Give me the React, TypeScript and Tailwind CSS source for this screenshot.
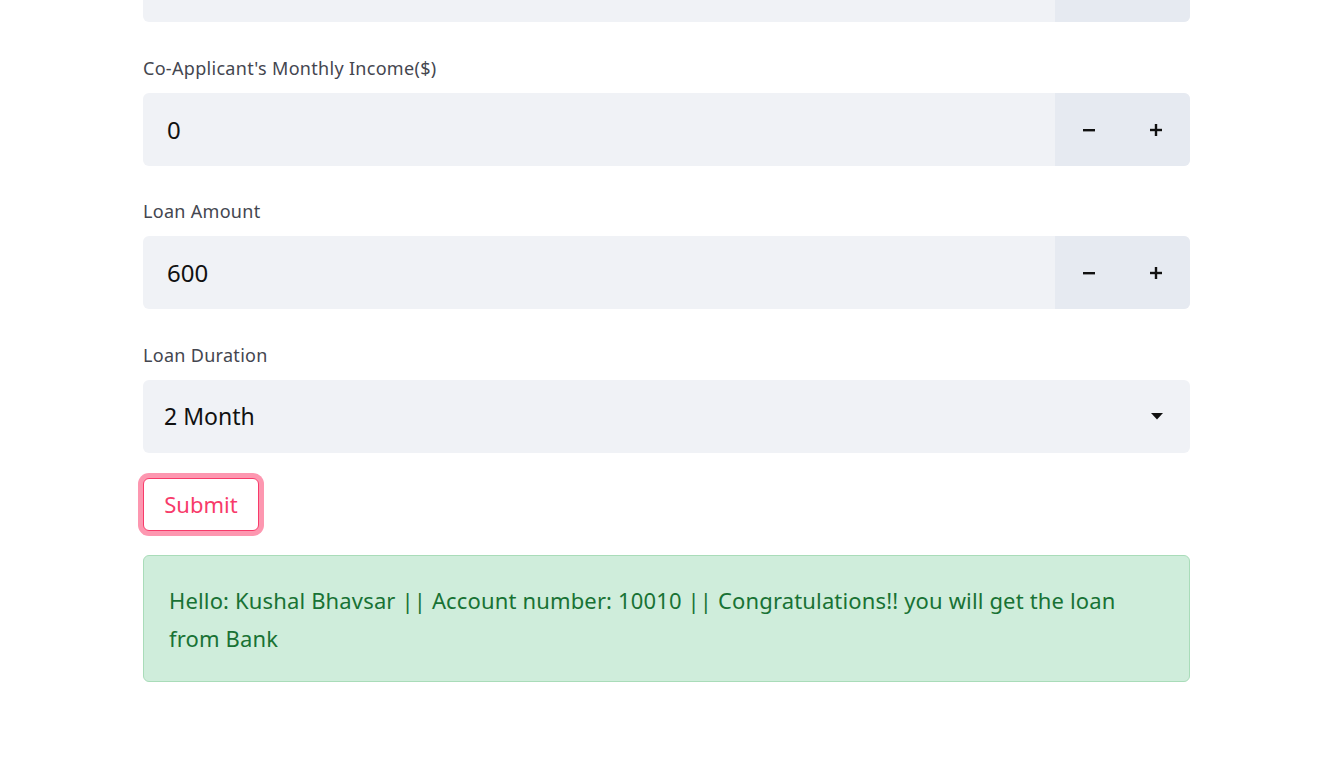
import React, { useState } from "react";

const font = { fontFamily: '"Noto Sans", "Open Sans", sans-serif' };

interface NumberFieldProps {
  label: string;
  value: number;
  onChange: (v: number) => void;
}

const Stepper = ({ onMinus, onPlus }: { onMinus: () => void; onPlus: () => void }) => (
  <div className="flex w-[135px] bg-[#e6eaf1] rounded-r-md">
    <button
      type="button"
      onClick={onMinus}
      className="w-1/2 flex items-center justify-center cursor-pointer"
    >
      <svg width="14" height="14" viewBox="0 0 14 14">
        <rect x="1" y="6" width="12" height="2.4" fill="#111" />
      </svg>
    </button>
    <button
      type="button"
      onClick={onPlus}
      className="w-1/2 flex items-center justify-center cursor-pointer"
    >
      <svg width="14" height="14" viewBox="0 0 14 14">
        <rect x="1" y="5.8" width="12" height="2.4" fill="#111" />
        <rect x="5.8" y="1" width="2.4" height="12" fill="#111" />
      </svg>
    </button>
  </div>
);

const NumberField = ({ label, value, onChange }: NumberFieldProps) => (
  <div className="flex flex-col">
    <label className="h-6 leading-6 text-[18px] tracking-[0.3px] text-[#44464f] mb-[13px]">{label}</label>
    <div className="flex h-[73px] rounded-md bg-[#f0f2f6]">
      <input
        type="text"
        value={value}
        onChange={(e) => onChange(Number(e.target.value) || 0)}
        className="flex-1 bg-transparent pl-[24px] text-[24px] text-[#111] outline-none"
        style={font}
      />
      <Stepper onMinus={() => onChange(value - 1)} onPlus={() => onChange(value + 1)} />
    </div>
  </div>
);

export default function App() {
  const [co_income, set_co_income] = useState(0);
  const [loan_amount, set_loan_amount] = useState(600);

  return (
    <div className="min-h-[759px] bg-white" style={font}>
      <div className="w-[1047px] ml-[143px] flex flex-col">
        <div className="flex h-[22px] rounded-b-md bg-[#f0f2f6]">
          <div className="flex-1" />
          <div className="w-[135px] bg-[#e6eaf1] rounded-br-md" />
        </div>

        <div className="mt-[34px] flex flex-col gap-[33px]">
          <NumberField label="Co-Applicant's Monthly Income($)" value={co_income} onChange={set_co_income} />
          <NumberField label="Loan Amount" value={loan_amount} onChange={set_loan_amount} />

          <div className="mt-px flex flex-col">
            <label className="h-6 leading-6 text-[18px] tracking-[0.3px] text-[#44464f] mb-[13px]">Loan Duration</label>
            <div className="flex h-[73px] items-center justify-between rounded-md bg-[#f0f2f6] pl-[21px] pr-[27px]">
              <span className="text-[23px] text-[#111]">2 Month</span>
              <svg width="12" height="7" viewBox="0 0 12 7">
                <path d="M0 0 L12 0 L6 6.5 Z" fill="#111" />
              </svg>
            </div>
          </div>
        </div>

        <div className="mt-[25px]">
          <button
            type="button"
            className="h-[53px] w-[116px] rounded-md border border-[#f73b6a] bg-white text-[22px] text-[#f73b6a] ring-[5px] ring-[#fd97b0] cursor-pointer"
            style={font}
          >
            Submit
          </button>
        </div>

        <div className="mt-[24px] rounded-md border border-[#a9dcb9] bg-[#cfeddb] pl-[25px] pr-[24px] pt-[25px] pb-[24px] text-[22px] tracking-[0.15px] leading-[38px] text-[#187234]">
          Hello: Kushal Bhavsar || Account number: 10010 || Congratulations!! you will get the loan from Bank
        </div>
      </div>
    </div>
  );
}
